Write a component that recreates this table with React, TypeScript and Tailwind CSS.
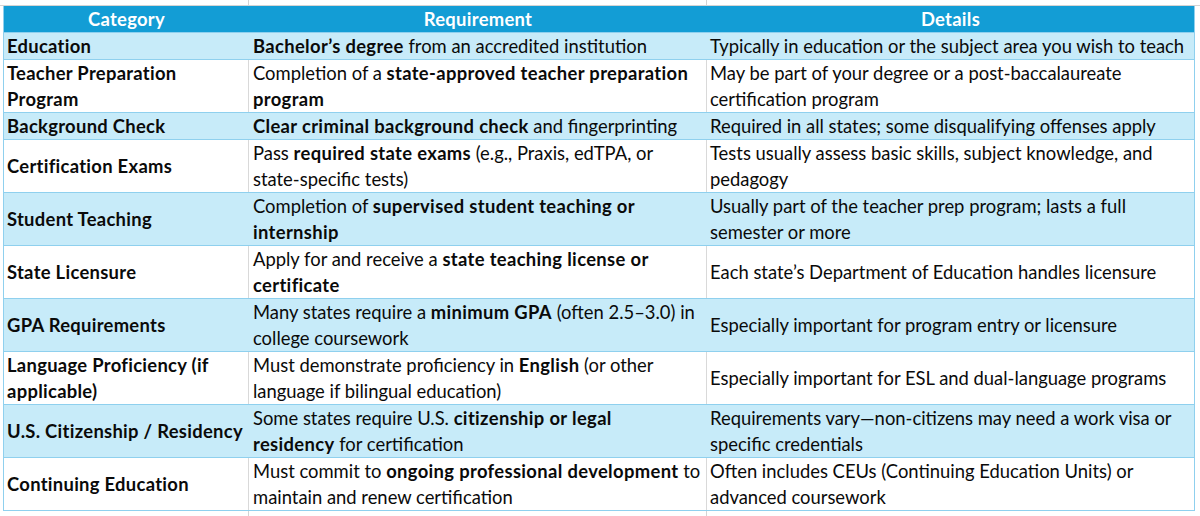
import React from 'react';

type Row = {
  category: React.ReactNode;
  requirement: React.ReactNode;
  details: React.ReactNode;
  tall?: boolean;
};

const ROWS: Row[] = [
  {
    category: 'Education',
    requirement: (
      <>
        <b>Bachelor’s degree</b> from an accredited institution
      </>
    ),
    details: 'Typically in education or the subject area you wish to teach',
  },
  {
    tall: true,
    category: (
      <>
        Teacher Preparation
        <br />
        Program
      </>
    ),
    requirement: (
      <>
        Completion of a <b>state-approved teacher preparation</b>
        <br />
        <b>program</b>
      </>
    ),
    details: (
      <>
        May be part of your degree or a post-baccalaureate
        <br />
        certification program
      </>
    ),
  },
  {
    category: 'Background Check',
    requirement: (
      <>
        <b>Clear criminal background check</b> and fingerprinting
      </>
    ),
    details: 'Required in all states; some disqualifying offenses apply',
  },
  {
    tall: true,
    category: 'Certification Exams',
    requirement: (
      <>
        Pass <b>required state exams</b> (e.g., Praxis, edTPA, or
        <br />
        state-specific tests)
      </>
    ),
    details: (
      <>
        Tests usually assess basic skills, subject knowledge, and
        <br />
        pedagogy
      </>
    ),
  },
  {
    tall: true,
    category: 'Student Teaching',
    requirement: (
      <>
        Completion of <b>supervised student teaching or</b>
        <br />
        <b>internship</b>
      </>
    ),
    details: (
      <>
        Usually part of the teacher prep program; lasts a full
        <br />
        semester or more
      </>
    ),
  },
  {
    tall: true,
    category: 'State Licensure',
    requirement: (
      <>
        Apply for and receive a <b>state teaching license or</b>
        <br />
        <b>certificate</b>
      </>
    ),
    details: 'Each state’s Department of Education handles licensure',
  },
  {
    tall: true,
    category: 'GPA Requirements',
    requirement: (
      <>
        Many states require a <b>minimum GPA</b> (often 2.5–3.0) in
        <br />
        college coursework
      </>
    ),
    details: 'Especially important for program entry or licensure',
  },
  {
    tall: true,
    category: (
      <>
        Language Proficiency (if
        <br />
        applicable)
      </>
    ),
    requirement: (
      <>
        Must demonstrate proficiency in <b>English</b> (or other
        <br />
        language if bilingual education)
      </>
    ),
    details: 'Especially important for ESL and dual-language programs',
  },
  {
    tall: true,
    category: 'U.S. Citizenship / Residency',
    requirement: (
      <>
        Some states require U.S. <b>citizenship or legal</b>
        <br />
        <b>residency</b> for certification
      </>
    ),
    details: (
      <>
        Requirements vary—non-citizens may need a work visa or
        <br />
        specific credentials
      </>
    ),
  },
  {
    tall: true,
    category: 'Continuing Education',
    requirement: (
      <>
        Must commit to <b>ongoing professional development</b> to
        <br />
        maintain and renew certification
      </>
    ),
    details: (
      <>
        Often includes CEUs (Continuing Education Units) or
        <br />
        advanced coursework
      </>
    ),
  },
];

const FONT = { fontFamily: 'Lato, "Noto Sans", sans-serif' };

export default function App() {
  return (
    <div className="w-[1200px] h-[516px] bg-white overflow-hidden text-[#0a0a0a]" style={FONT}>
      {/* grid strip above the table */}
      <div className="flex h-[6px] border-b border-[#d4d4d4]">
        <div className="w-[249px] border-r border-[#d4d4d4]" />
        <div className="w-[458px] border-r border-[#d4d4d4]" />
        <div className="flex-1" />
      </div>

      <div className="ml-[3px] w-[1192px] border-x border-[#8fd0ee]">
        <div className="flex h-[27px] bg-[#139dd5] text-white font-bold text-[18.4px] leading-[26px] tracking-[0.3px] border-b border-[#8fd0ee]">
          <div className="w-[245px] text-center">Category</div>
          <div className="w-[458px] text-center">Requirement</div>
          <div className="flex-1 text-center">Details</div>
        </div>

        {ROWS.map((row, i) => {
          const banded = i % 2 === 0;
          const divider = banded ? '' : 'border-r border-[#d9d9d9]';
          return (
            <div
              key={i}
              className={`flex text-[18.4px] leading-[26.5px] border-b border-[#8fd0ee] ${
                row.tall ? 'h-[53px]' : 'h-[27px]'
              } ${banded ? 'bg-[#c7ebf9]' : 'bg-white'}`}
            >
              <div className={`w-[245px] flex items-center pl-[3px] font-bold tracking-[0.3px] whitespace-nowrap ${divider}`}>
                <div>{row.category}</div>
              </div>
              <div className={`w-[458px] flex items-center pl-[4px] whitespace-nowrap [&_b]:tracking-[0.35px] ${divider}`}>
                <div>{row.requirement}</div>
              </div>
              <div className="flex-1 flex items-center pl-[3px] whitespace-nowrap">
                <div>{row.details}</div>
              </div>
            </div>
          );
        })}
      </div>

      {/* grid strip below the table */}
      <div className="flex h-[8px]">
        <div className="w-[249px] border-r border-[#d4d4d4]" />
        <div className="w-[458px] border-r border-[#d4d4d4]" />
        <div className="flex-1" />
      </div>
    </div>
  );
}
